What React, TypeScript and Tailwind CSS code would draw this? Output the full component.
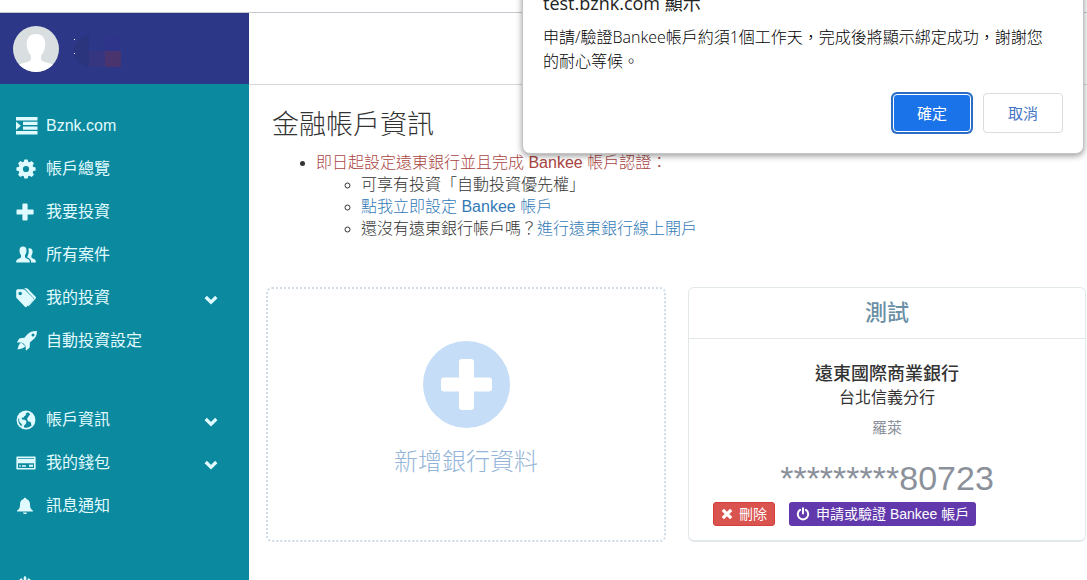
import { ReactNode } from 'react';

type IconProps = { className?: string };

const IndentIcon = ({ className }: IconProps) => (
  <svg viewBox="0 0 22 18" fill="currentColor" className={className} aria-hidden="true">
    <path d="M0 0h21.5v3.400H0zM7 4.800h14.5v3.300H7zM7 9.500h14.5v3.300H7zM0 14.100h21.5v3.400H0zM0 4.600l4.800 4.200L0 13z" />
  </svg>
);

const CogIcon = ({ className }: IconProps) => (
  <svg viewBox="0 0 20 20" className={className} aria-hidden="true">
    <g fill="currentColor">
      <path
        fillRule="evenodd"
        d="M10 2.6a7.4 7.4 0 1 0 0 14.8a7.4 7.4 0 0 0 0-14.8zM10 6.9a3.1 3.1 0 1 1 0 6.2a3.1 3.1 0 0 1 0-6.2z"
      />
      {[0, 45, 90, 135, 180, 225, 270, 315].map((angle) => (
        <path key={angle} d="M8.4 .4h3.2l.9 3.4h-5z" transform={`rotate(${angle} 10 10)`} />
      ))}
    </g>
  </svg>
);

const PlusIcon = ({ className }: IconProps) => (
  <svg viewBox="0 0 18 18" fill="currentColor" className={className} aria-hidden="true">
    <path d="M7.300.5h3.400q.9 0 .9.900v5h5.100q.9 0 .9.900v3.400q0 .9-.9.900h-5.100v5q0 .9-.9.900H7.300q-.9 0-.9-.9v-5h-5q-.9 0-.9-.9V7.300q0-.9.9-.9h5v-5q0-.9.9-.9z" />
  </svg>
);

const UsersIcon = ({ className }: IconProps) => (
  <svg viewBox="0 0 20 18" fill="currentColor" className={className} aria-hidden="true">
    <path d="M7 .6c2.300 0 3.500 1.500 3.500 3.800 0 2-.6 3.700-1.500 4.700v1.700c0 .8.500 1.100 1.300 1.500 2.500 1.200 3.500 1.700 3.500 3.300v1H.2v-1c0-1.600 1-2.100 3.500-3.300.8-.4 1.300-.7 1.300-1.500V9.100c-.9-1-1.500-2.700-1.500-4.700C3.500 2.100 4.700.6 7 .6z" />
    <path d="M13.600 2.200c1.900 0 3 1.300 3 3.300 0 1.700-.5 3-1.200 3.900v1.500c0 .7.400 1 1.100 1.300 2.200 1 3.300 1.600 3.300 3.200v1.200h-4.700v-1.200c0-2-1.200-2.900-3.700-4v-1.100c.8-1.100 1.300-3 1.300-5 0-.9-.1-1.900-.4-2.600.4-.3.800-.5 1.300-.5z" />
  </svg>
);

const TagsIcon = ({ className }: IconProps) => (
  <svg viewBox="0 0 20 20" fill="currentColor" className={className} aria-hidden="true">
    <path
      fillRule="evenodd"
      d="M.2 4V2.700Q.2 1.200 1.700 1.200H7.300q.8 0 1.400.6l8.500 8.300q.8.900 0 1.700l-6.500 7q-.9.900-1.800 0L.8 10.300Q.2 9.700.2 8.900zM4.200 3.700a1.800 1.800 0 1 0 0 3.600a1.800 1.800 0 0 0 0-3.600z"
    />
    <path d="M8 .2h2.600q.7 0 1.200.5l7.800 8.100q.8.900 0 1.800l-6.900 7.600-.8-.9 6.200-6.900L9.600 1.500z" />
  </svg>
);

const RocketIcon = ({ className }: IconProps) => (
  <svg viewBox="0 0 22 22" fill="currentColor" className={className} aria-hidden="true">
    <path
      fillRule="evenodd"
      d="M20.900 1.100C16.500.9 13 2.300 10.300 5.400L8.400 7.700 4 8.300Q3.300 8.400 2.900 9L.9 12.500l4.500-.1L8 13.700l.4.700 1.200 1.900.3 4.500 3.300-2.700q.5-.4.500-1l.2-4.700 2.200-1.800C19.500 8.300 21.100 5.300 20.900 1.100zM17 3.600a1.500 1.500 0 1 1 0 3a1.500 1.500 0 0 1 0-3z"
    />
    <path d="M5.300 12.500l4 3.800c-1.400 2-4.400 2.600-7.800 3.200.6-2.800 1.400-5.400 3.800-7z" />
  </svg>
);

const GlobeIcon = ({ className }: IconProps) => (
  <svg viewBox="0 0 20 20" className={className} aria-hidden="true">
    <circle cx="10" cy="10" r="8.600" fill="none" stroke="currentColor" strokeWidth="1.700" />
    <path
      fill="currentColor"
      d="M2.500 5.500L6 2l4-.5 1.200 1.300-1.700.9.700 1.200-1.700 1-1 1.600-1.800.3.300 1.700 2.900.3 1.700 1.700-.9 2.600-1.500 1.500-.6 2.900-1.800-.6-.2-4-2.100-2-.4-3.200-1.800-1.200zM12.500 6.500l1.700-2.300L13 3l2-.5 3.300 4 .7 3.500-1.500 4.500-2 .8-.9-3.300-2.600-.7-1-2.500 1.500-2.300z"
    />
  </svg>
);

const CardIcon = ({ className }: IconProps) => (
  <svg viewBox="0 0 20 16" fill="currentColor" className={className} aria-hidden="true">
    <path
      fillRule="evenodd"
      d="M1.200 1.500h17.600q.8 0 .8.800v11.400q0 .8-.8.800H1.200q-.8 0-.8-.8V2.300q0-.8.8-.8zM2 3.200v.9h16v-.9zM2 8.200v4.800h16V8.200z"
    />
    <path d="M3.200 10.300h1.600v1.500H3.200zM6 10.300h4v1.500H6zM13 9.800h4v2h-4z" />
  </svg>
);

const BellIcon = ({ className }: IconProps) => (
  <svg viewBox="0 0 18 18" fill="currentColor" className={className} aria-hidden="true">
    <path d="M9 .8c.8 0 1.300.5 1.300 1.200C12.900 2.600 14 4.700 14 7.300c0 3.600.6 4.500 2.600 6 .6.500.4 1.300-.4 1.300H1.800c-.8 0-1-.8-.4-1.300C3.400 11.800 4 10.900 4 7.300 4 4.700 5.100 2.600 7.700 2 7.700 1.300 8.200.8 9 .8zM7 15.500h4c-.2 1-1 1.600-2 1.600s-1.800-.6-2-1.600z" />
  </svg>
);

const ChevronIcon = ({ className }: IconProps) => (
  <svg viewBox="0 0 14 10" fill="none" stroke="currentColor" className={className} aria-hidden="true">
    <path d="M1.700 2L7 7.200 12.300 2" strokeWidth="3.200" />
  </svg>
);

const RemoveIcon = ({ className }: IconProps) => (
  <svg viewBox="0 0 12 12" fill="none" stroke="currentColor" className={className} aria-hidden="true">
    <path d="M1.800 1.800l8.400 8.400M10.200 1.800l-8.400 8.400" strokeWidth="3.300" />
  </svg>
);

const PowerIcon = ({ className }: IconProps) => (
  <svg viewBox="0 0 14 14" fill="none" stroke="currentColor" strokeLinecap="round" className={className} aria-hidden="true">
    <path d="M7 1.200v5.300M4.100 2.900a5.200 5.200 0 1 0 5.800 0" strokeWidth="2" />
  </svg>
);

const Avatar = () => (
  <svg viewBox="0 0 46 46" className="size-[46px] shrink-0" role="img" aria-label="avatar">
    <clipPath id="avatar">
      <circle cx="23" cy="23" r="23" />
    </clipPath>
    <g clipPath="url(#avatar)">
      <path fill="#d9dfe1" d="M0 0h46v46H0z" />
      <path
        fill="#fff"
        d="M23 8c6.200 0 9.300 4 9.300 10 0 4.500-1.300 8.400-4.300 11.500v3.200c0 2 2 2.800 5 3.500 5 1.100 8 2.300 10 5.800v5H3v-5c2-3.500 5-4.700 10-5.800 3-.7 5-1.500 5-3.500v-3.200c-3-3.100-4.300-7-4.300-11.500C13.700 12 16.800 8 23 8z"
      />
    </g>
  </svg>
);

type NavItem = { label: string; icon: ReactNode; expandable?: boolean };

const mainItems: NavItem[] = [
  { label: 'Bznk.com', icon: <IndentIcon className="w-[22px]" /> },
  { label: '帳戶總覽', icon: <CogIcon className="w-5" /> },
  { label: '我要投資', icon: <PlusIcon className="w-[18px]" /> },
  { label: '所有案件', icon: <UsersIcon className="w-5" /> },
  { label: '我的投資', icon: <TagsIcon className="w-5" />, expandable: true },
  { label: '自動投資設定', icon: <RocketIcon className="w-[22px]" /> },
];

const accountItems: NavItem[] = [
  { label: '帳戶資訊', icon: <GlobeIcon className="w-5" />, expandable: true },
  { label: '我的錢包', icon: <CardIcon className="w-5" />, expandable: true },
  { label: '訊息通知', icon: <BellIcon className="w-[18px]" /> },
];

function NavList({ items }: { items: NavItem[] }) {
  return (
    <ul>
      {items.map(({ label, icon, expandable }) => (
        <li key={label}>
          <a href="#" className="flex h-[43px] items-center pr-[31px] pl-4">
            <span className="flex w-[30px] items-center">{icon}</span>
            <span className="flex-1">{label}</span>
            {expandable && <ChevronIcon className="mt-1 w-[14px]" />}
          </a>
        </li>
      ))}
    </ul>
  );
}

function Sidebar() {
  return (
    <aside className="w-[249px] shrink-0 bg-[#0b899e] text-[#e0fbff]">
      <div className="flex h-[71px] items-center gap-[15px] bg-[#2d3788] px-[13px]">
        <Avatar />
        <svg viewBox="0 0 48 32" className="mt-1 w-12" aria-hidden="true">
          <path fill="#2b357d" d="M15 0v32Q0 28 0 16T15 0z" />
          <path fill="#363680" d="M15 16h16v16H15z" />
          <path fill="#2d348a" d="M31 0h16v16H31z" />
          <path fill="#49346d" d="M31 16h16v16H31z" />
          <path fill="#fff" d="M0 4h1v1H0zM0 18h1v1H0z" />
        </svg>
      </div>
      <nav className="flex flex-col gap-9 pt-5">
        <NavList items={mainItems} />
        <NavList items={accountItems} />
        <a href="#" aria-label="登出" className="flex h-[43px] items-center pl-4">
          <PowerIcon className="w-[18px]" />
        </a>
      </nav>
    </aside>
  );
}

function ConfirmDialog() {
  return (
    <div
      role="dialog"
      aria-label="test.bznk.com 顯示"
      className="absolute -top-5 right-[3px] w-[562px] rounded-lg border border-[#c5c5c5] bg-white px-5 pt-2 pb-5 font-['Open_Sans','Noto_Sans_CJK_TC',sans-serif] text-[#222] shadow-[0_2px_6px_rgba(0,0,0,0.4)]"
    >
      <h2 className="text-[18px] leading-7">test.bznk.com 顯示</h2>
      <p className="mt-2 pr-3 text-base leading-6 font-light text-black">
        申請/驗證Bankee帳戶約須1個工作天，完成後將顯示綁定成功，謝謝您的耐心等候。
      </p>
      <div className="mt-5 flex items-center justify-end gap-3 text-[15px]">
        <button className="h-[38px] w-[78px] rounded-sm bg-[#1a73e8] text-white ring-2 ring-[#2b6cc4] outline outline-1 -outline-offset-1 outline-white">
          確定
        </button>
        <button className="h-10 w-20 rounded border border-[#dadce0] text-[#4374c5]">取消</button>
      </div>
    </div>
  );
}

function AddBankCard() {
  return (
    <button className="flex h-[255px] flex-1 flex-col items-center rounded-md border-2 border-dotted border-[#cfdce8] pt-[52px] text-[#94b5d8]">
      <svg viewBox="0 0 87 87" className="w-[87px]" aria-hidden="true">
        <circle cx="43.500" cy="43.500" r="43.500" fill="#c5ddf6" />
        <path
          fill="#fff"
          d="M39 18h9q3 0 3 3v15.500h15q3 0 3 3v8q0 3-3 3H51V66q0 3-3 3h-9q-3 0-3-3V50.500H21q-3 0-3-3v-8q0-3 3-3h15V21q0-3 3-3z"
        />
      </svg>
      <span className="mt-[18px] text-2xl font-light">新增銀行資料</span>
    </button>
  );
}

function BankCard() {
  return (
    <section className="flex h-[255px] flex-1 flex-col rounded-md border border-b-2 border-[#e2e8ea] text-center">
      <h2 className="border-b border-[#e2e8ea] text-[22px] leading-[50px] font-medium text-[#6b8fa5]">測試</h2>
      <p className="mt-[23px] text-lg leading-6 font-medium text-[#333]">遠東國際商業銀行</p>
      <p className="text-base leading-6 text-[#333]">台北信義分行</p>
      <p className="mt-2 text-[15px] leading-5 text-[#8b919b]">羅萊</p>
      <p className="mt-5 text-[34px] leading-10 text-[#8b919b]">*********80723</p>
      <div className="mt-1 flex gap-[14px] pl-6 text-sm leading-none text-white">
        <button className="flex h-6 items-center gap-[6px] rounded-[3px] border border-[#d43f3a] bg-[#d9534f] px-[7px]">
          <RemoveIcon className="w-3" />
          刪除
        </button>
        <button className="flex h-6 items-center gap-[6px] rounded-[3px] bg-[#6239ac] px-[7px]">
          <PowerIcon className="w-[14px]" />
          申請或驗證 Bankee 帳戶
        </button>
      </div>
    </section>
  );
}

export default function App() {
  return (
    <div className="relative flex h-screen flex-col overflow-hidden bg-white pt-3 font-['Liberation_Sans','Noto_Sans_CJK_TC',sans-serif] text-base text-[#333]">
      <div className="flex min-h-0 flex-1 border-t border-[#c8c9d0]">
        <Sidebar />
        <div className="min-w-0 flex-1">
          <header className="h-[72px] border-b border-[#d5d5da]" />
          <main className="pt-5 pr-px pl-[17px]">
            <h1 className="pl-[6px] text-[27px] leading-10 font-light">金融帳戶資訊</h1>
            <ul className="mt-[7px] list-disc pl-[50px] leading-[22px] font-light">
              <li>
                <span className="text-[#a94442]">即日起設定遠東銀行並且完成 Bankee 帳戶認證：</span>
                <ul className="list-[circle] pl-[45px]">
                  <li>可享有投資「自動投資優先權」</li>
                  <li>
                    <a href="#" className="text-[#337ab7]">點我立即設定 Bankee 帳戶</a>
                  </li>
                  <li>
                    還沒有遠東銀行帳戶嗎？
                    <a href="#" className="text-[#337ab7]">進行遠東銀行線上開戶</a>
                  </li>
                </ul>
              </li>
            </ul>
            <div className="mt-[47px] flex gap-[22px]">
              <AddBankCard />
              <BankCard />
            </div>
          </main>
        </div>
      </div>
      <ConfirmDialog />
    </div>
  );
}
